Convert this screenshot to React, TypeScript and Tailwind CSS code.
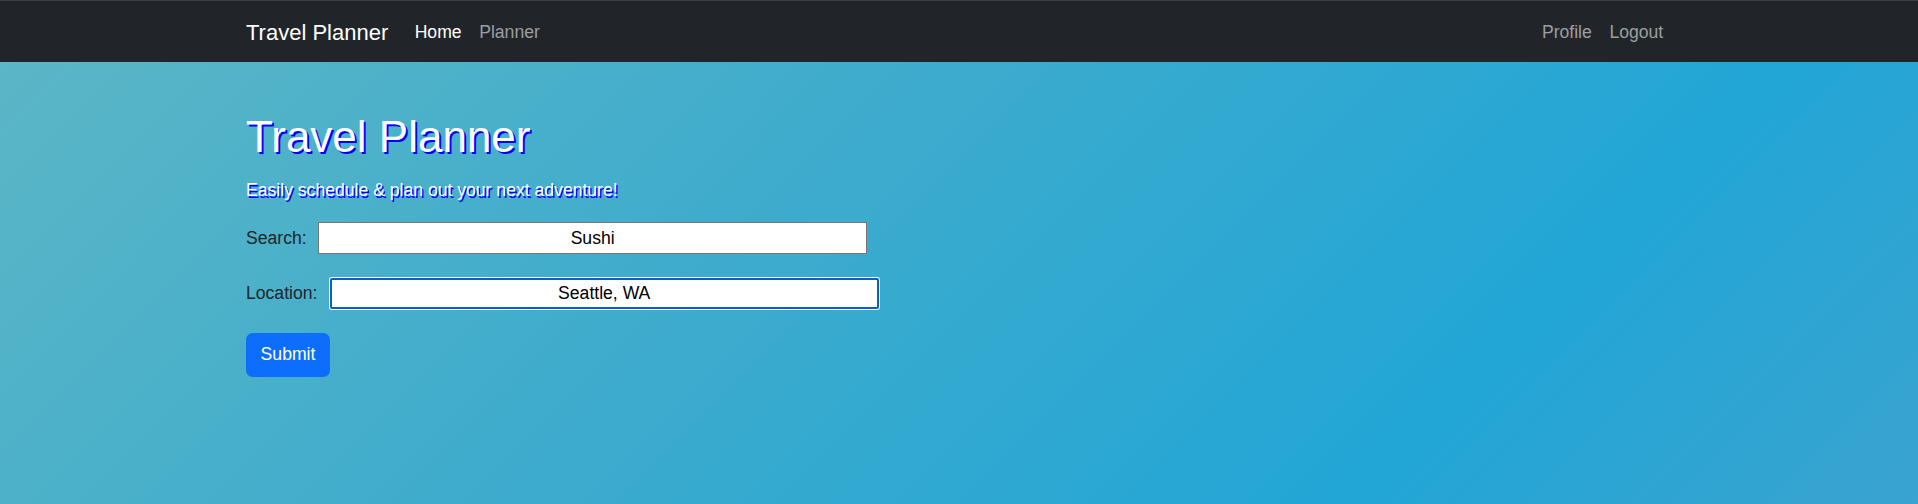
import React from "react";

export default function App() {
  return (
    <div className="min-h-screen flex flex-col font-['Liberation_Sans',Arial,Helvetica,sans-serif] text-[17.6px] leading-[1.5] text-[#212529]">
      <nav className="h-[62px] shrink-0 bg-[#212529] border-t border-[#3b3e42]">
        <div className="w-[1426px] mx-auto h-full flex items-center pt-[2px]">
          <a className="text-[22px] leading-[1.5] text-white mr-[17.6px]">Travel Planner</a>
          <div className="flex items-center">
            <a className="px-[8.8px] text-white">Home</a>
            <a className="px-[8.8px] text-[#9c9ea0]">Planner</a>
          </div>
          <div className="ml-auto flex items-center">
            <a className="px-[8.8px] text-[#9c9ea0]">Profile</a>
            <a className="px-[8.8px] text-[#9c9ea0]">Logout</a>
          </div>
        </div>
      </nav>
      <main className="flex-1 bg-[linear-gradient(135deg,#5bb6c6_0%,#3dabcd_40%,#22a6d6_76%,#3aa3cf_100%)]">
        <div className="w-[1426px] mx-auto pt-[48.5px]">
          <h1 className="text-[44px] leading-[1.2] text-white mb-[13.5px] [text-shadow:2px_2px_0_#0000ff]">
            Travel Planner
          </h1>
          <p className="text-white [text-shadow:1.5px_1.5px_0_#0000ff] mb-[19px]">
            Easily schedule &amp; plan out your next adventure!
          </p>
          <div className="flex items-center gap-[11.5px] h-[32px]">
            <label>Search:</label>
            <input
              readOnly
              value="Sushi"
              className="w-[549px] h-[31.6px] bg-white border border-[#767676] text-center text-black text-[17.6px] outline-none"
            />
          </div>
          <div className="flex items-center gap-[12.3px] h-[32px] mt-[23.5px]">
            <label>Location:</label>
            <input
              readOnly
              value="Seattle, WA"
              className="w-[549px] h-[31.6px] bg-white border-2 border-[#0a5fce] rounded-[2px] shadow-[0_0_0_1px_#ffffff] text-center text-black text-[17.6px] outline-none"
            />
          </div>
          <button className="mt-[23px] w-[84px] h-[44px] bg-[#0d6efd] text-white rounded-[6.6px] text-[17.6px]">
            Submit
          </button>
        </div>
      </main>
    </div>
  );
}
